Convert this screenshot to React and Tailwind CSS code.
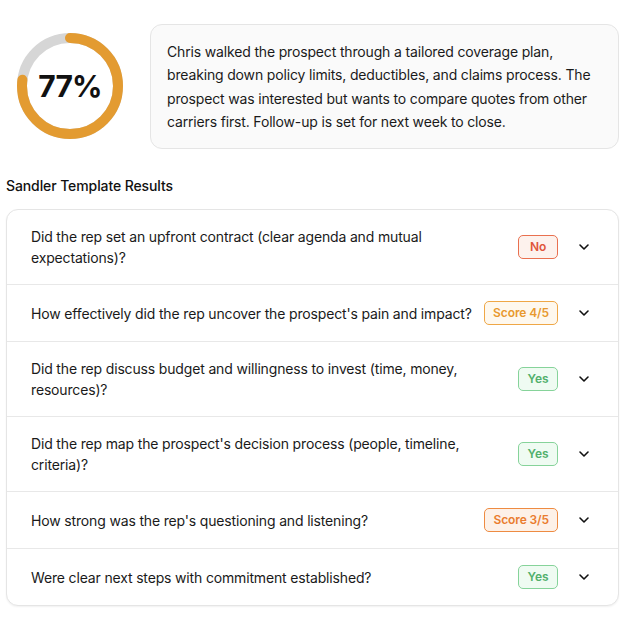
import React from "react";

const rows = [
  { q: "Did the rep set an upfront contract (clear agenda and mutual expectations)?", b: "No", t: "no" },
  { q: "How effectively did the rep uncover the prospect's pain and impact?", b: "Score 4/5", t: "amber" },
  { q: "Did the rep discuss budget and willingness to invest (time, money, resources)?", b: "Yes", t: "yes" },
  { q: "Did the rep map the prospect's decision process (people, timeline, criteria)?", b: "Yes", t: "yes" },
  { q: "How strong was the rep's questioning and listening?", b: "Score 3/5", t: "orange" },
  { q: "Were clear next steps with commitment established?", b: "Yes", t: "yes" },
];

const badgeCls = {
  no: "border-[#e9704f] bg-[#fdf2ed] text-[#e0553a]",
  amber: "border-[#efa746] bg-[#fef8ee] text-[#e8992e]",
  orange: "border-[#ee8b42] bg-[#fdf1e8] text-[#ea7c2e]",
  yes: "border-[#86d39a] bg-[#effbf2] text-[#52b06c]",
};

function Ring() {
  const r = 48;
  const c = 2 * Math.PI * r;
  const p = 0.77;
  return (
    <svg width="106" height="106" viewBox="0 0 106 106" className="absolute inset-0">
      <circle cx="53" cy="53" r={r} fill="none" stroke="#d6d6d6" strokeWidth="10" />
      <circle
        cx="53"
        cy="53"
        r={r}
        fill="none"
        stroke="#e39b31"
        strokeWidth="10"
        strokeLinecap="round"
        strokeDasharray={`${c * p} ${c}`}
        transform="rotate(-90 53 53)"
      />
    </svg>
  );
}

export default function App() {
  return (
    <div className="w-[634px] h-[617px] bg-white text-[#111] font-['Inter','Noto_Sans',sans-serif]">
      <div className="flex items-start pt-6 pl-[17px] pr-[15px]">
        <div className="relative w-[106px] h-[106px] mt-[9px] shrink-0 flex items-center justify-center">
          <Ring />
          <span className="relative text-[30px] font-bold tracking-tight text-[#111]">77%</span>
        </div>
        <div className="ml-[27px] flex-1 rounded-xl border border-[#e5e5e5] bg-[#fafafa] px-4 py-[15px] text-[14px] leading-[23.3px] tracking-[-0.16px] text-[#1a1a1a]">
          Chris walked the prospect through a tailored coverage plan, breaking down policy limits, deductibles, and claims process. The prospect was interested but wants to compare quotes from other carriers first. Follow-up is set for next week to close.
        </div>
      </div>
      <div className="pl-[6px] pr-[15px]">
        <h2 className="mt-[27px] mb-[13px] text-[14px] font-medium leading-5 tracking-[-0.1px] text-[#111]">Sandler Template Results</h2>
        <div className="rounded-xl border border-[#e5e5e5] bg-white shadow-[0_1px_2px_rgba(0,0,0,0.06)]">
          {rows.map((r, i) => (
            <div
              key={i}
              className={`flex items-center pl-6 pr-[26px] py-4 ${i > 0 ? "border-t border-[#e8e8e8]" : ""}`}
            >
              <div className="flex-1 pr-3 text-[14px] leading-[21px] tracking-[-0.16px] text-[#1a1a1a]">{r.q}</div>
              <span
                className={`inline-flex h-6 min-w-10 items-center justify-center rounded-[5px] border px-2 text-[12px] font-semibold tracking-[-0.1px] ${badgeCls[r.t]}`}
              >
                {r.b}
              </span>
              <svg className="ml-[18px] shrink-0" width="16" height="16" viewBox="0 0 16 16" fill="none">
                <path d="M4 6l4 4 4-4" stroke="#111" strokeWidth="1.6" strokeLinecap="round" strokeLinejoin="round" />
              </svg>
            </div>
          ))}
        </div>
      </div>
    </div>
  );
}
